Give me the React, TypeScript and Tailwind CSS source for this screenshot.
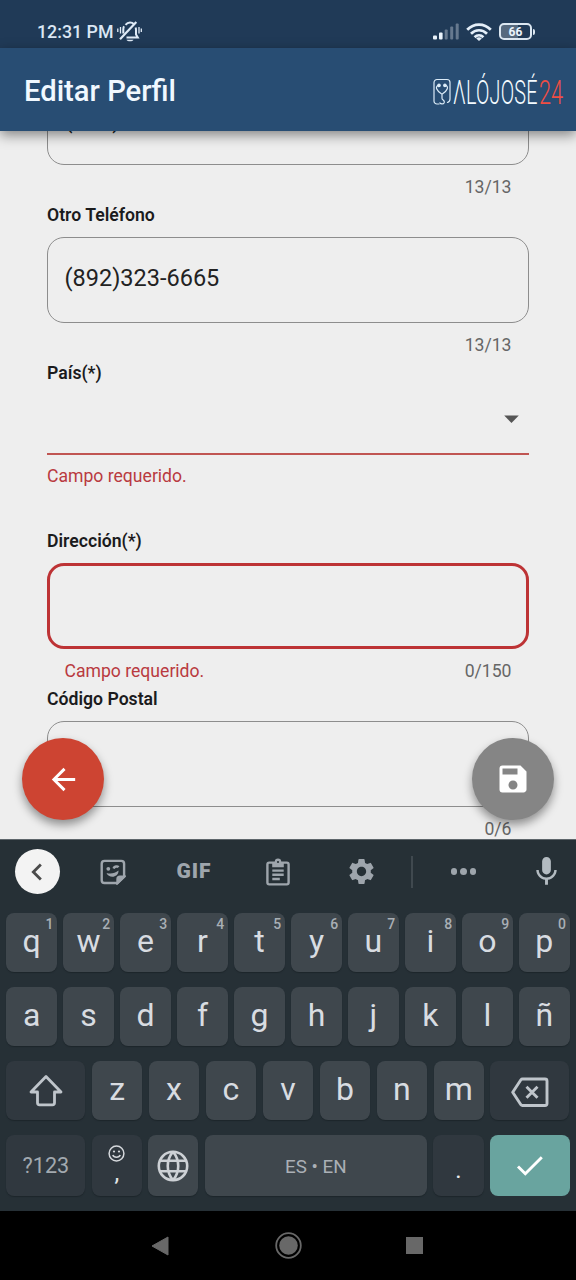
import type { ReactNode } from 'react';
import { MdArrowBack, MdArrowDropDown, MdChevronLeft, MdMic, MdSave, MdSettings } from 'react-icons/md';

function BellOff() {
  return (
    <svg width="25" height="22" viewBox="0 0 25 22" fill="none" stroke="#dfeaf6" strokeWidth="2">
      <path d="M8.500 3.800C10 2 11.600 1.500 13 1.500c1.700 0 3 .6 4.100 1.700M18.600 6.500c.3.800.4 1.600.4 2.500v4.500l1.800 3H9.500M6.300 12.500V8.500c0-1.200.2-2.200.7-3.200" />
      <path d="M3 18.200 19.300 1" strokeWidth="2.200" />
      <path d="M.8 7.500v3.500M3.500 6v6.500M22 6v6.500M24.300 7.500v3.500" strokeWidth="1.300" />
      <path d="M9.500 18.800h7c-1 2-6 2-7 0z" fill="#dfeaf6" stroke="none" />
    </svg>
  );
}

function Signal() {
  return (
    <svg width="27" height="17" viewBox="0 0 27 17">
      <rect x="0" y="12.500" width="4" height="4" rx="1" fill="#eaf3fb" />
      <rect x="6" y="9.500" width="3.600" height="7" rx="1" fill="#eaf3fb" />
      <rect x="11.700" y="6.500" width="3" height="10" rx="1" fill="#66798f" />
      <rect x="17.200" y="3.500" width="3" height="13" rx="1" fill="#66798f" />
      <rect x="22.700" y="0.500" width="3" height="16" rx="1" fill="#66798f" />
    </svg>
  );
}

function Wifi() {
  return (
    <svg width="26" height="18" viewBox="0 0 26 18" fill="none" stroke="#e4eef8" strokeWidth="2.700">
      <path d="M1.200 6.800C7.800-.2 18.200-.2 24.800 6.800" />
      <path d="M5 10.700c4.500-4.600 11.500-4.600 16 0" />
      <path d="M8.600 14.200c2.500-2.600 6.300-2.600 8.800 0" />
      <path d="M10.200 15.500c1.600-1.600 4-1.600 5.600 0L13 18z" fill="#e4eef8" stroke="none" />
    </svg>
  );
}

function Battery() {
  return (
    <div className="flex items-center">
      <div className="flex h-[17px] w-[33px] items-center justify-center rounded-[5px] border-2 border-[#dce7f1] bg-linear-to-r from-[#56697e] from-60% to-[#203a57] to-60% text-[12px] leading-none font-bold text-[#eaf3fb]">
        66
      </div>
      <div className="ml-px h-[6px] w-[2px] rounded-r bg-[#dce7f1]" />
    </div>
  );
}

function Logo() {
  return (
    <div className="flex h-[50px] w-[132px] items-center pt-[5px]">
      <svg className="shrink-0" width="18" height="28" viewBox="0 0 18 28" fill="none" stroke="#dcecf8" strokeWidth="1.200" strokeLinecap="round">
        <path d="M6 26H4a3 3 0 0 1-3-3V4.500a3 3 0 0 1 3-3h10a3 3 0 0 1 3 3V21c0 2-1 3-2.500 3.500" />
        <path d="M6 7.200c-4.500 1-2.800 5.500 3 9 5.800-3.500 7.300-8 3-9M9 16.200v4c0 2 3.200 2 2.200 4.500-.8 1.700-3.400 1.600-4.400.2" />
        <circle cx="6" cy="7.400" r="1.200" fill="#dcecf8" />
        <circle cx="11.900" cy="7.400" r="1.200" fill="#dcecf8" />
      </svg>
      <div className="w-[88px] shrink-0 pl-[2px]">
        <div className="w-[142px] origin-left scale-x-60 pt-px text-[33px] leading-[40px] font-light tracking-[0.300px] whitespace-nowrap text-[#f4fbff]">
          ΛLÓJOSÉ
        </div>
      </div>
      <div className="w-[27px] shrink-0">
        <div className="w-[38px] origin-left scale-x-66 pt-px text-[33px] leading-[40px] font-light whitespace-nowrap text-[#f04e44]">24</div>
      </div>
    </div>
  );
}

function Label({ children, className = '' }: { children: string; className?: string }) {
  return <div className={`h-[22px] text-[17.650px] leading-[22px] font-semibold text-[#1b1b1d] ${className}`}>{children}</div>;
}

function TextBox({ value = '', invalid = false }: { value?: string; invalid?: boolean }) {
  return (
    <div
      className={`flex h-[86px] shrink-0 items-center rounded-[17px] px-[16.500px] pb-[3px] text-[23.500px] text-[#222] ${
        invalid ? 'border-[3px] border-[#bd3335]' : 'border-[1.500px] border-[#8d8d8d]'
      }`}
    >
      {value}
    </div>
  );
}

function Footer({ count, error = '' }: { count: string; error?: string }) {
  return (
    <div className="mt-[11px] flex h-[22px] shrink-0 justify-between px-[17.500px] text-[17.600px] leading-[22px] text-[#666]">
      <span className="text-[#b93a40]">{error}</span>
      <span>{count}</span>
    </div>
  );
}

function Sticker() {
  return (
    <svg width="26" height="26" viewBox="0 0 26 26" fill="none" stroke="#9ea5ac" strokeWidth="2.400">
      <path d="M17.500 24H4.500A2.800 2.800 0 0 1 1.700 21.200V4.700a2.800 2.800 0 0 1 2.800-2.800h16.800a2.800 2.800 0 0 1 2.800 2.800v13z" />
      <path d="M17.500 24v-3.800a2.500 2.500 0 0 1 2.500-2.500h4.100z" fill="#9ea5ac" />
      <path d="M6.500 14c4 1.200 8.500.5 12-2.500.3 7-9.500 8.500-12 2.500z" fill="#9ea5ac" stroke="none" />
      <circle cx="8.300" cy="9.800" r="1.900" fill="#9ea5ac" stroke="none" />
      <path d="M13.500 9.500c1-2.300 4-2.500 5-1.200" />
    </svg>
  );
}

function Clipboard() {
  return (
    <svg width="24" height="28" viewBox="0 0 24 28" fill="none" stroke="#9ea5ac" strokeWidth="2.400">
      <rect x="1.400" y="4.600" width="21.200" height="21.800" rx="1.800" />
      <path d="M6.200 4.500h3a2.900 2.900 0 0 1 5.600 0h3v4.700H6.200z" fill="#9ea5ac" stroke="none" />
      <circle cx="12" cy="3.600" r="3.200" fill="#9ea5ac" stroke="none" />
      <circle cx="12" cy="4" r="1.100" fill="#263036" stroke="none" />
      <path d="M6.300 12.600h11.400M6.300 16.800h11.400M6.300 21h7.500" />
    </svg>
  );
}

function Shift() {
  return (
    <svg width="34" height="33" viewBox="0 0 34 33" fill="none" stroke="#bfc5cb" strokeWidth="2.800" strokeLinejoin="round">
      <path d="M17 2.500 2 18h6.500v10.800a2 2 0 0 0 2 2h13a2 2 0 0 0 2-2V18H32z" />
    </svg>
  );
}

function Backspace() {
  return (
    <svg width="38" height="31" viewBox="0 0 38 31" fill="none" stroke="#bfc5cb" strokeWidth="2.900" strokeLinejoin="round">
      <path d="M11.500 2H34a2 2 0 0 1 2 2v22.500a2 2 0 0 1-2 2H11.500a2 2 0 0 1-1.600-.8L1.700 15.200 9.900 2.800a2 2 0 0 1 1.600-.8z" />
      <path d="m15.500 9.700 11 11M26.500 9.700l-11 11" />
    </svg>
  );
}

function Globe() {
  return (
    <svg width="32" height="32" viewBox="0 0 32 32" fill="none" stroke="#cdd1d5" strokeWidth="2.600">
      <circle cx="16" cy="16" r="14.200" />
      <path d="M2.700 10.700h26.600M2.700 21.300h26.600M16 1.700c-7 8.500-7 20.100 0 28.600M16 1.700c7 8.500 7 20.100 0 28.600" />
    </svg>
  );
}

function Smiley() {
  return (
    <svg width="17" height="17" viewBox="0 0 17 17" fill="none" stroke="#d5d8dc" strokeWidth="1.500">
      <circle cx="8.500" cy="8.500" r="7.400" />
      <path d="M4.800 10c1.200 3 6.200 3 7.400 0" strokeWidth="1.600" />
      <circle cx="6" cy="6.500" r="1.100" fill="#d5d8dc" stroke="none" />
      <circle cx="11" cy="6.500" r="1.100" fill="#d5d8dc" stroke="none" />
    </svg>
  );
}

function Key({ children, hint = '' }: { children: string; hint?: string }) {
  return (
    <div className="relative flex h-[59px] flex-1 items-center justify-center rounded-[8px] bg-[#3f474d] pb-[3px] text-[32px] leading-none text-[#d8dce1] shadow-[0_1px_1px_#1d262b]">
      {children}
      {hint && <span className="absolute top-[3px] right-[3.500px] text-[14px] leading-[16px] font-medium text-[#a9afb5]">{hint}</span>}
    </div>
  );
}

function DarkKey({ children, className }: { children: ReactNode; className: string }) {
  return (
    <div className={`flex items-center justify-center rounded-[8px] bg-[#30383f] shadow-[0_1px_1px_#1d262b] ${className}`}>{children}</div>
  );
}

const digits = '1234567890';

export default function App() {
  return (
    <div className="flex h-[1280px] w-[576px] flex-col overflow-hidden bg-[#eee] font-[Roboto,sans-serif]">
      <div className="z-10 flex h-[48px] shrink-0 items-center bg-[#203a57] pt-[15px] pr-[41px] pl-[37px]">
        <span className="pt-px text-[17.800px] leading-[22px] font-medium text-[#dbe7f4]">12:31 PM</span>
        <span className="ml-[4px]"><BellOff /></span>
        <div className="ml-auto flex items-center gap-[6px]">
          <Signal />
          <Wifi />
          <span className="ml-px"><Battery /></span>
        </div>
      </div>

      <header className="z-10 flex h-[83px] shrink-0 items-center justify-between bg-[#284d73] pr-[11px] pl-[24px] shadow-[0_4px_12px_rgba(0,0,0,0.450)]">
        <h1 className="pt-[4px] text-[29.200px] leading-none font-medium text-[#f0f8ff]">Editar Perfil</h1>
        <Logo />
      </header>

      <main className="relative h-[708px] shrink-0 overflow-hidden">
        <div className="-mt-[52px] flex flex-col px-[47px]">
          <TextBox value="(829)585-6352" />
          <Footer count="13/13" />
          <Label className="mt-[6px] mb-[11px]">Otro Teléfono</Label>
          <TextBox value="(892)323-6665" />
          <Footer count="13/13" />
          <Label className="mt-[6px]">País(*)</Label>
          <div className="flex h-[71px] items-center justify-end border-b-2 border-[#c05552] text-[#555]">
            <MdArrowDropDown size={35} />
          </div>
          <div className="mt-[10px] h-[22px] text-[17.600px] leading-[22px] text-[#b93a40]">Campo requerido.</div>
          <Label className="mt-[43px] mb-[11px]">Dirección(*)</Label>
          <TextBox invalid />
          <Footer count="0/150" error="Campo requerido." />
          <Label className="mt-[6px] mb-[11px]">Código Postal</Label>
          <TextBox />
          <Footer count="0/6" />
        </div>
        <button className="absolute top-[607px] left-[22px] flex size-[82px] items-center justify-center rounded-full bg-[#cd4432] text-white shadow-[0_5px_10px_rgba(0,0,0,0.400)]">
          <MdArrowBack size={35} />
        </button>
        <button className="absolute top-[607px] left-[472px] flex size-[82px] items-center justify-center rounded-full bg-[#858585] text-white shadow-[0_5px_10px_rgba(0,0,0,0.400)]">
          <MdSave size={36} />
        </button>
      </main>

      <section className="flex h-[372px] shrink-0 flex-col border-t border-[#5e666b] bg-[#263036]">
        <div className="flex h-[73px] shrink-0 items-center pb-[10px] text-[#9ea5ac]">
          <div className="flex w-[75px] justify-center">
            <div className="flex size-[45px] items-center justify-center rounded-full bg-[#f3f3f3] pr-px text-[#4b4b4b]">
              <MdChevronLeft size={34} />
            </div>
          </div>
          <div className="flex w-[75px] justify-center"><Sticker /></div>
          <div className="w-[88px] text-center text-[21px] leading-none font-black tracking-[1px]">GIF</div>
          <div className="flex w-[80px] justify-center"><Clipboard /></div>
          <div className="flex w-[86px] justify-center"><MdSettings size={31} /></div>
          <div className="flex w-[16px] justify-center"><div className="h-[32px] w-[1.500px] bg-[#40494f]" /></div>
          <div className="flex w-[87px] justify-center gap-[3px]">
            <span className="size-[6.500px] rounded-full bg-[#9ea5ac]" />
            <span className="size-[6.500px] rounded-full bg-[#9ea5ac]" />
            <span className="size-[6.500px] rounded-full bg-[#9ea5ac]" />
          </div>
          <div className="ml-[9px] flex w-[60px] justify-center text-[#b3bbc1]"><MdMic size={35} /></div>
        </div>
        <div className="flex flex-col gap-[15px] pr-[6.500px] pl-[6.400px]">
          <div className="flex gap-[6.500px]">
            {'qwertyuiop'.split('').map((k, i) => <Key key={k} hint={digits[i]}>{k}</Key>)}
          </div>
          <div className="flex gap-[6.500px]">
            {'asdfghjklñ'.split('').map((k) => <Key key={k}>{k}</Key>)}
          </div>
          <div className="flex gap-[6.500px]">
            <DarkKey className="h-[59px] w-[79px]"><Shift /></DarkKey>
            {'zxcvbnm'.split('').map((k) => <Key key={k}>{k}</Key>)}
            <DarkKey className="h-[59px] w-[79px] pt-[3px]"><Backspace /></DarkKey>
          </div>
          <div className="flex h-[61px] gap-[6.300px]">
            <DarkKey className="w-[79px] pt-px text-[21.600px] text-[#a2a9af]">?123</DarkKey>
            <DarkKey className="w-[50.200px] flex-col pb-[2px] text-[24px] leading-[24px] text-[#e2e5e8]">
              <Smiley />
              <span className="-mt-[1px]">,</span>
            </DarkKey>
            <div className="flex w-[50.200px] items-center justify-center rounded-[8px] bg-[#3f474d] shadow-[0_1px_1px_#1d262b]"><Globe /></div>
            <div className="flex flex-1 items-center justify-center rounded-[8px] bg-[#3f474d] pt-[3px] text-[18.800px] text-[#abb0b6] shadow-[0_1px_1px_#1d262b]">ES • EN</div>
            <DarkKey className="w-[50.500px] pt-[8px] text-[24px] leading-none text-[#e8eaec]">.</DarkKey>
            <div className="flex w-[79.500px] items-center justify-center rounded-[8px] bg-[#69a49f]">
              <svg width="28" height="22" viewBox="0 0 28 22" fill="none" stroke="#fff" strokeWidth="2.900">
                <path d="m2 11.500 7.300 7.300L25.800 2.200" />
              </svg>
            </div>
          </div>
        </div>
      </section>

      <nav className="flex h-[69px] shrink-0 items-center bg-black">
        <div className="flex w-[224px] justify-end pr-[55px]">
          <svg width="18" height="20" viewBox="0 0 18 20" fill="#686868"><path d="M17 1v18L1 10z" stroke="#686868" strokeLinejoin="round" /></svg>
        </div>
        <div className="flex w-[128px] justify-center">
          <svg width="27" height="27" viewBox="0 0 27 27">
            <circle cx="13.500" cy="13.500" r="12.300" fill="none" stroke="#686868" strokeWidth="1.800" />
            <circle cx="13.500" cy="13.500" r="9.300" fill="#686868" />
          </svg>
        </div>
        <div className="w-[224px] pl-[54px]"><div className="size-[17px] bg-[#686868]" /></div>
      </nav>
    </div>
  );
}
